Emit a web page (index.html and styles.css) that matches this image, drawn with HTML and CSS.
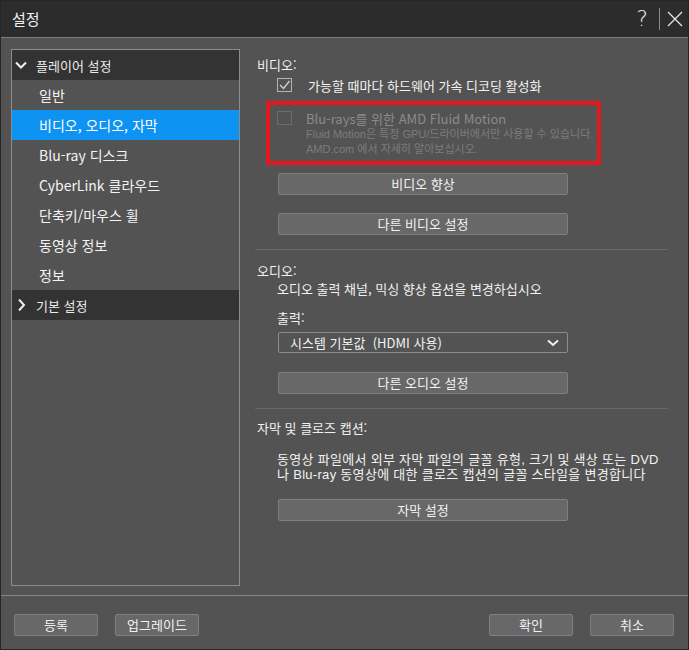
FILE: index.html
```html
<!DOCTYPE html>
<html lang="ko">
<head>
<meta charset="utf-8">
<title>설정</title>
<link rel="stylesheet" href="styles.css">
</head>
<body>
<div class="window">
  <div class="titlebar">
    <span class="title">설정</span>
    <div class="tb-actions">
      <span class="help">?</span>
      <span class="tb-sep"></span>
      <svg class="close" width="16" height="16" viewBox="0 0 16 16"><path d="M1 1 L15 15 M15 1 L1 15" stroke="#e6e6e6" stroke-width="1.3" fill="none"/></svg>
    </div>
  </div>

  <div class="main">
    <nav class="sidebar">
      <div class="group">
        <svg class="chev" width="12" height="12" viewBox="0 0 12 12"><path d="M1 3.5 L6 8.5 L11 3.5" stroke="#f0f0f0" stroke-width="2" fill="none"/></svg>
        <span>플레이어 설정</span>
      </div>
      <div class="item">일반</div>
      <div class="item active">비디오, 오디오, 자막</div>
      <div class="item">Blu-ray 디스크</div>
      <div class="item">CyberLink 클라우드</div>
      <div class="item">단축키/마우스 휠</div>
      <div class="item">동영상 정보</div>
      <div class="item">정보</div>
      <div class="group">
        <svg class="chev" width="12" height="12" viewBox="0 0 12 12"><path d="M4 0.5 L9 6 L4 11.5" stroke="#f0f0f0" stroke-width="2" fill="none"/></svg>
        <span>기본 설정</span>
      </div>
    </nav>

    <section class="content">
      <div class="label l-video">비디오:</div>
      <div class="check-row">
        <span class="cbox checked">
          <svg width="13" height="12" viewBox="0 0 13 12"><path d="M2 6 L5.5 9.5 L11.5 2" stroke="#cfcfcf" stroke-width="1.4" fill="none"/></svg>
        </span>
        <span>가능할 때마다 하드웨어 가속 디코딩 활성화</span>
      </div>

      <div class="highlight">
        <div class="check-row disabled">
          <span class="cbox"></span>
          <span>Blu-rays를 위한 AMD Fluid Motion</span>
        </div>
        <div class="note">Fluid Motion은 특정 GPU/드라이버에서만 사용할 수 있습니다.<br>AMD.com 에서 자세히 알아보십시오.</div>
      </div>

      <button class="btn btn-first">비디오 향상</button>
      <button class="btn btn-next">다른 비디오 설정</button>

      <div class="divider d-first"></div>

      <div class="label l-audio">오디오:</div>
      <div class="desc">오디오 출력 채널, 믹싱 향상 옵션을 변경하십시오</div>
      <div class="desc sub-label">출력:</div>
      <div class="select">
        <span>시스템 기본값&nbsp; (HDMI 사용)</span>
        <svg width="12" height="8" viewBox="0 0 12 8"><path d="M1 1.5 L6 6 L11 1.5" stroke="#f0f0f0" stroke-width="2" fill="none"/></svg>
      </div>
      <button class="btn btn-audio">다른 오디오 설정</button>

      <div class="divider d-second"></div>

      <div class="label l-sub">자막 및 클로즈 캡션:</div>
      <div class="para">동영상 파일에서 외부 자막 파일의 글꼴 유형, 크기 및 색상 또는 DVD<br>나 Blu-ray 동영상에 대한 클로즈 캡션의 글꼴 스타일을 변경합니다</div>
      <button class="btn btn-sub">자막 설정</button>
    </section>
  </div>

  <div class="footer">
    <div class="footer-group">
      <button class="fbtn">등록</button>
      <button class="fbtn">업그레이드</button>
    </div>
    <div class="footer-group">
      <button class="fbtn">확인</button>
      <button class="fbtn">취소</button>
    </div>
  </div>
</div>
</body>
</html>
```

FILE: styles.css
```css
* { box-sizing: border-box; }

html, body {
  margin: 0;
  padding: 0;
  background: #2b2b2b;
}

body {
  font-family: "Noto Sans CJK KR", "Noto Sans", sans-serif;
  color: #f0f0f0;
}

.window {
  width: 689px;
  height: 650px;
  border: 1px solid #262626;
  background: #535353;
  display: flex;
  flex-direction: column;
}

/* title bar */
.titlebar {
  height: 37px;
  flex: none;
  background: #2c2c2c;
  border-bottom: 1px solid #7d7d7d;
  display: flex;
  align-items: center;
  justify-content: space-between;
  padding: 0 5px 0 11px;
}

.title {
  font-size: 15px;
  color: #f2f2f2;
  margin-top: -1px;
}

.tb-actions {
  display: flex;
  align-items: center;
}

.help {
  font-family: "DejaVu Sans", sans-serif;
  font-weight: 200;
  font-size: 22px;
  color: #ececec;
  line-height: 22px;
}

.tb-sep {
  width: 1px;
  height: 22px;
  background: #8a8a8a;
  margin: 0 7px 0 11px;
}

.close { display: block; }

/* main */
.main {
  flex: 1;
  display: flex;
  align-items: flex-start;
  padding: 11px 0 0 10px;
}

.sidebar {
  width: 229px;
  height: 537px;
  border: 1px solid #8c8c8c;
  padding: 0;
  flex: none;
}

.group {
  height: 30px;
  background: #333333;
  display: flex;
  align-items: center;
  padding-left: 3px;
  font-size: 13px;
  color: #ececec;
}

.group .chev {
  margin-right: 9px;
  flex: none;
}

.item {
  height: 30px;
  display: flex;
  align-items: center;
  padding-left: 27px;
  font-size: 14px;
  color: #f4f4f4;
}

.item.active {
  background: #0e93f3;
  color: #ffffff;
}

/* content */
.content {
  margin-left: 15px;
  width: 413px;
  display: flex;
  flex-direction: column;
  font-size: 13px;
}

.label {
  line-height: 18px;
  padding-left: 2px;
  color: #f0f0f0;
}

.l-video { margin-top: 7px; }
.l-audio { margin-top: 12px; }
.l-sub { margin-top: 10px; }

.check-row {
  display: flex;
  align-items: center;
  height: 18px;
  margin-top: 2px;
  margin-left: 22px;
  color: #f4f4f4;
}

.cbox {
  width: 15px;
  height: 14px;
  border: 1px solid #b4b4b4;
  display: flex;
  align-items: center;
  justify-content: center;
  margin-right: 16px;
  flex: none;
}

.highlight {
  margin-top: 7px;
  margin-left: 11px;
  width: 335px;
  height: 64px;
  border: 4px solid #e3181f;
  padding: 4px 0 0 7px;
}

.highlight .check-row {
  margin: 0;
  color: #8b8b8b;
}

.highlight .cbox {
  border-color: #6c6c6c;
  margin-right: 14px;
}

.note {
  margin-left: 29px;
  font-family: "Liberation Sans", "Noto Sans CJK KR", sans-serif;
  font-size: 11px;
  line-height: 15px;
  color: #7c7c7c;
  white-space: nowrap;
}

.btn {
  margin-left: 23px;
  width: 290px;
  height: 22px;
  background: #686868;
  border: 1px solid #7f7f7f;
  border-radius: 2px;
  color: #f2f2f2;
  font-family: inherit;
  font-size: 13px;
  padding: 0;
  line-height: 18px;
}

.btn-first { margin-top: 8px; }
.btn-next { margin-top: 18px; }
.btn-audio { margin-top: 19px; }
.btn-sub { margin-top: 17px; }

.divider {
  height: 1px;
  background: #686868;
}

.d-first { margin-top: 14px; }
.d-second { margin-top: 14px; }

.desc {
  margin-left: 22px;
  line-height: 18px;
  color: #f2f2f2;
}

.sub-label { margin-top: 11px; }

.select {
  margin-top: 5px;
  margin-left: 23px;
  width: 290px;
  height: 21px;
  border: 1px solid #8c8c8c;
  border-radius: 2px;
  display: flex;
  align-items: center;
  justify-content: space-between;
  padding: 0 8px 0 11px;
  color: #f2f2f2;
}

.select svg { flex: none; }

.para {
  margin-top: 15px;
  margin-left: 22px;
  font-family: "Liberation Sans", "Noto Sans CJK KR", sans-serif;
  line-height: 15px;
  letter-spacing: 0.3px;
  color: #f2f2f2;
  white-space: nowrap;
}

/* footer */
.footer {
  flex: none;
  height: 54px;
  border-top: 1px solid #858585;
  display: flex;
  justify-content: space-between;
  align-items: flex-start;
  padding: 18px 14px 0 13px;
}

.footer-group {
  display: flex;
  gap: 17px;
}

.fbtn {
  width: 84px;
  height: 22px;
  background: #686868;
  border: 1px solid #7f7f7f;
  border-radius: 2px;
  color: #f2f2f2;
  font-family: inherit;
  font-size: 13px;
  padding: 0;
  line-height: 18px;
}
```
